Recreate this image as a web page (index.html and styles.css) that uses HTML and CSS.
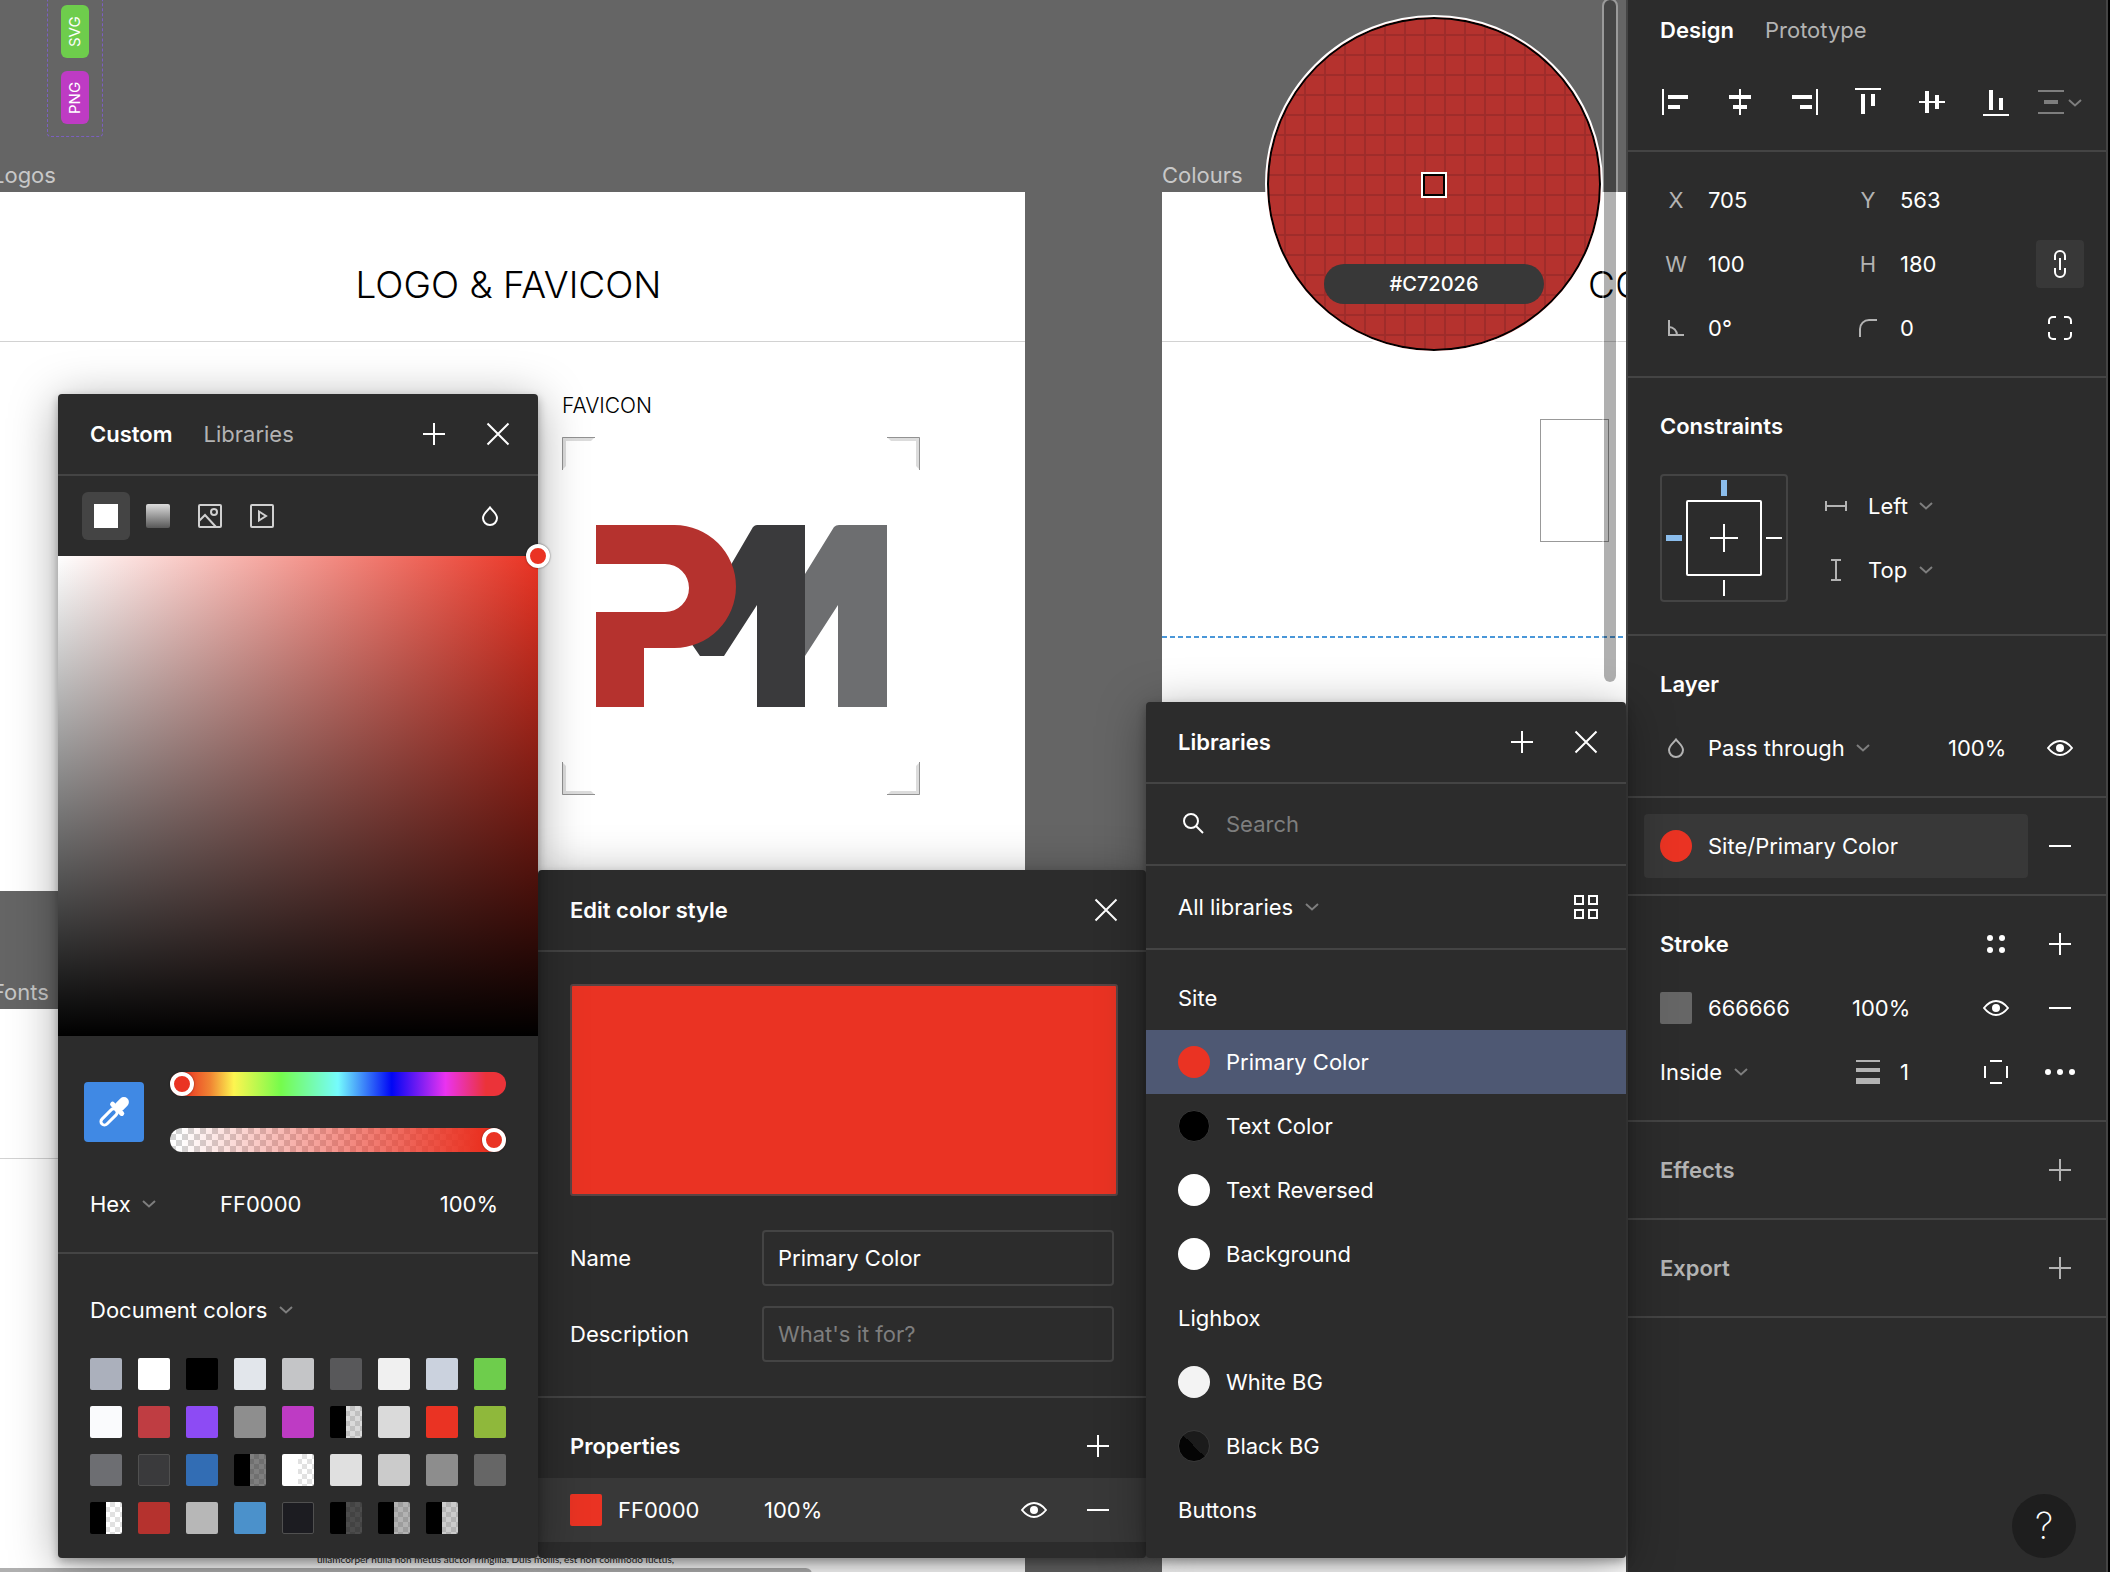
FILE: index.html
```html
<!DOCTYPE html>
<html lang="en">
<head>
<meta charset="utf-8">
<title>Style guide</title>
<link rel="stylesheet" href="styles.css">
</head>
<body>
<svg class="defs" aria-hidden="true">
  <symbol id="plus" viewBox="0 0 24 24"><path d="M12 1v22M1 12h22"/></symbol>
  <symbol id="minus" viewBox="0 0 24 24"><path d="M1 12h22"/></symbol>
  <symbol id="close" viewBox="0 0 24 24"><path d="M1.500 1.500l21 21M22.500 1.500l-21 21"/></symbol>
  <symbol id="chevron" viewBox="0 0 14 8"><path d="M1 1l6 5.500L13 1"/></symbol>
  <symbol id="eye" viewBox="0 0 26 18"><path d="M1 9C5 4 9 2 13 2s8 2 12 7c-4 5-8 7-12 7S5 14 1 9z"/><circle cx="13" cy="9" r="4" fill="currentColor" stroke="none"/></symbol>
  <symbol id="drop" viewBox="0 0 16 20"><path d="M8 1.500C6 4.500 1 7.500 1 12a7 7 0 0 0 14 0C15 7.500 10 4.500 8 1.500z"/></symbol>
</svg>

<div class="app">
  <main class="canvas">
    <div class="board">
      <div class="tags">
        <span class="tag tag-svg">SVG</span>
        <span class="tag tag-png">PNG</span>
      </div>

      <figure class="frame frame-logos">
        <figcaption>Logos</figcaption>
        <div class="sheet">
          <h1>LOGO &amp; FAVICON</h1>
          <section class="favicon">
            <h2>FAVICON</h2>
            <svg class="solid" width="358" height="358" viewBox="0 0 358 358" aria-label="PM favicon">
              <g fill="#dcdcdc">
                <path d="M0 0h33l-4 4H4v25l-4 4z"/><path d="M358 0h-33l4 4h25v25l4 4z"/>
                <path d="M0 358h33l-4-4H4v-25l-4-4z"/><path d="M358 358h-33l4-4h25v-25l4-4z"/>
              </g>
              <path fill="none" stroke="#929292" stroke-width="1" d="M.5 33V.5H33M357.500 33V.5H325M.5 325v32.500H33M357.500 325v32.500H325"/>
              <path fill="#6d6e70" d="M243 137l29-47q2-2 5-2h48v182h-49V168l-33 51z"/>
              <path fill="#3a3a3c" d="M170 126l21-36q2-2 4-2h48v182h-48V168l-33 51h-24l-9-13z"/>
              <path fill="#b5322e" d="M34 88h78.500a61.500 61.500 0 0 1 0 123H82v59H34V175h69a24 24 0 0 0 0-48H34z"/>
            </svg>
          </section>
        </div>
      </figure>

      <figure class="frame frame-fonts">
        <figcaption>Fonts</figcaption>
        <div class="sheet">
          <h1></h1>
          <p class="specimen">ullamcorper nulla non metus auctor fringilla. Duis mollis, est non commodo luctus,</p>
        </div>
      </figure>

      <figure class="frame frame-colours">
        <figcaption>Colours</figcaption>
        <div class="sheet">
          <h1>CO</h1>
          <div class="shape"></div>
          <div class="guide"></div>
        </div>
      </figure>

      <div class="scroll scroll-v"></div>
      <div class="scroll scroll-h"></div>

      <div class="loupe">
        <div class="loupe-pixel"></div>
        <output class="loupe-value">#C72026</output>
      </div>
    </div>

    <section class="panel panel-edit">
      <header class="panel-head">
        <h2>Edit color style</h2>
        <button class="icon" aria-label="Close"><svg width="24" height="24"><use href="#close"/></svg></button>
      </header>
      <div class="edit-body">
        <div class="preview"></div>
        <div class="field"><label for="style-name">Name</label><input id="style-name" type="text" value="Primary Color"></div>
        <div class="field"><label for="style-desc">Description</label><input id="style-desc" type="text" placeholder="What's it for?"></div>
      </div>
      <div class="props-head">
        <h2>Properties</h2>
        <button class="icon" aria-label="Add property"><svg width="24" height="24"><use href="#plus"/></svg></button>
      </div>
      <div class="props-row">
        <button class="chip chip-red" aria-label="Fill color"></button>
        <input class="value" type="text" value="FF0000" aria-label="Fill hex">
        <input class="value" type="text" value="100%" aria-label="Fill opacity">
        <button class="icon" aria-label="Toggle visibility"><svg width="26" height="18"><use href="#eye"/></svg></button>
        <button class="icon" aria-label="Remove fill"><svg width="24" height="24"><use href="#minus"/></svg></button>
      </div>
    </section>

    <section class="panel panel-color">
      <header class="panel-head">
        <div class="tabs"><button class="tab active">Custom</button><button class="tab">Libraries</button></div>
        <div class="head-actions">
          <button class="icon" aria-label="Create style"><svg width="24" height="24"><use href="#plus"/></svg></button>
          <button class="icon" aria-label="Close"><svg width="24" height="24"><use href="#close"/></svg></button>
        </div>
      </header>
      <div class="paint-types">
        <button class="paint selected" aria-label="Solid"><span class="paint-solid"></span></button>
        <button class="paint" aria-label="Gradient"><span class="paint-gradient"></span></button>
        <button class="paint" aria-label="Image"><svg width="24" height="24"><rect x="1" y="1" width="22" height="22" rx="1"/><circle cx="16" cy="8" r="3"/><path d="M1 17l6-6 11 12"/></svg></button>
        <button class="paint" aria-label="Video"><svg width="24" height="24"><rect x="1" y="1" width="22" height="22" rx="1"/><path d="M9 7.500l7 4.500-7 4.500z"/></svg></button>
        <button class="paint blend" aria-label="Blend mode"><svg width="16" height="20"><use href="#drop"/></svg></button>
      </div>
      <div class="spectrum"><span class="spectrum-handle"></span></div>
      <div class="mixer">
        <button class="picker" aria-label="Pick color">
          <svg width="32" height="32" viewBox="-2 -2 32 32"><g transform="rotate(45 14 14)"><rect x="9" y="-5" width="10" height="16" rx="5" fill="#fff" stroke="none"/><rect x="5" y="7" width="18" height="5" rx="2.500" fill="#fff" stroke="none"/><rect x="10.500" y="11" width="7" height="20" rx="3.500" stroke="#fff" stroke-width="3"/></g></svg>
        </button>
        <div class="sliders">
          <input class="slider hue" type="range" min="0" max="360" value="0" aria-label="Hue">
          <input class="slider alpha" type="range" min="0" max="100" value="100" aria-label="Opacity">
        </div>
      </div>
      <div class="hex-row">
        <label class="pick"><select aria-label="Color format"><option>Hex</option></select><svg width="14" height="8"><use href="#chevron"/></svg></label>
        <input class="value" type="text" value="FF0000" aria-label="Hex value">
        <input class="value end" type="text" value="100%" aria-label="Opacity value">
      </div>
      <div class="doc-colors">
        <label class="pick"><select aria-label="Color source"><option>Document colors</option></select><svg width="14" height="8"><use href="#chevron"/></svg></label>
        <div class="swatches">
          <i style="--c:#abb0bc"></i><i style="--c:#fff"></i><i style="--c:#000"></i><i style="--c:#e2e6eb"></i><i style="--c:#c4c5c7"></i><i style="--c:#58585a"></i><i style="--c:#f0f0f0"></i><i style="--c:#cbd2de"></i><i style="--c:#6ecd4c"></i>
          <i style="--c:#fafbfd"></i><i style="--c:#bf3d42"></i><i style="--c:#8d4bf4"></i><i style="--c:#8e8e8e"></i><i style="--c:#be3bc4"></i><i class="half" style="--a:.15"></i><i style="--c:#dadada"></i><i style="--c:#ea3323"></i><i style="--c:#8fb83b"></i>
          <i style="--c:#6d6e72"></i><i class="dim" style="--c:#3a3a3c"></i><i style="--c:#326db4"></i><i class="half" style="--a:.5"></i><i class="half light" style="--a:0"></i><i style="--c:#e0e0e0"></i><i style="--c:#cbcbcb"></i><i style="--c:#8d8d8d"></i><i style="--c:#666"></i>
          <i class="half" style="--a:0"></i><i style="--c:#b5322e"></i><i style="--c:#b7b7b7"></i><i style="--c:#4b91cb"></i><i class="dim" style="--c:#1c1c21"></i><i class="half" style="--a:.7"></i><i class="half" style="--a:.3"></i><i class="half" style="--a:.2"></i>
        </div>
      </div>
    </section>

    <section class="panel panel-libs">
      <header class="panel-head">
        <h2>Libraries</h2>
        <div class="head-actions">
          <button class="icon" aria-label="Create style"><svg width="24" height="24"><use href="#plus"/></svg></button>
          <button class="icon" aria-label="Close"><svg width="24" height="24"><use href="#close"/></svg></button>
        </div>
      </header>
      <label class="search"><svg width="32" height="22" viewBox="-5 0 32 22"><circle cx="8" cy="8" r="7"/><path d="M13 13l7 7"/></svg><input type="text" placeholder="Search" aria-label="Search"></label>
      <div class="lib-filter">
        <label class="pick"><select aria-label="Library"><option>All libraries</option></select><svg width="14" height="8"><use href="#chevron"/></svg></label>
        <button class="icon" aria-label="Show as grid"><svg width="24" height="24"><path d="M1 1h8v8H1zM15 1h8v8h-8zM1 15h8v8H1zM15 15h8v8h-8z"/></svg></button>
      </div>
      <div class="lib-list">
        <h3>Site</h3>
        <button class="style active"><span class="dot" style="--c:#ea3323"></span>Primary Color</button>
        <button class="style"><span class="dot dark" style="--c:#000"></span>Text Color</button>
        <button class="style"><span class="dot" style="--c:#fff"></span>Text Reversed</button>
        <button class="style"><span class="dot" style="--c:#fff"></span>Background</button>
        <h3>Lighbox</h3>
        <button class="style"><span class="dot" style="--c:#f3f3f3"></span>White BG</button>
        <button class="style"><span class="dot dark split"></span>Black BG</button>
        <h3>Buttons</h3>
      </div>
    </section>
  </main>

  <aside class="sidebar">
    <section class="group group-top">
      <div class="tabs"><button class="tab active">Design</button><button class="tab">Prototype</button></div>
      <div class="align">
        <button class="icon" aria-label="Align left"><svg class="solid" width="28" height="28"><path d="M0 1h2v26H0zM6 7h20v4H6zM6 17h12v4H6z"/></svg></button>
        <button class="icon" aria-label="Align horizontal centers"><svg class="solid" width="28" height="28"><path d="M13 1h2v26h-2zM3 7h22v4H3zM7 17h14v4H7z"/></svg></button>
        <button class="icon" aria-label="Align right"><svg class="solid" width="28" height="28"><path d="M26 1h2v26h-2zM2 7h20v4H2zM10 17h12v4H10z"/></svg></button>
        <button class="icon" aria-label="Align top"><svg class="solid" width="28" height="28"><path d="M1 0h26v2H1zM7 6h4v20H7zM17 6h4v12h-4z"/></svg></button>
        <button class="icon" aria-label="Align vertical centers"><svg class="solid" width="28" height="28"><path d="M1 13h26v2H1zM7 3h4v22H7zM17 7h4v14h-4z"/></svg></button>
        <button class="icon" aria-label="Align bottom"><svg class="solid" width="28" height="28"><path d="M1 26h26v2H1zM7 2h4v20H7zM17 10h4v12h-4z"/></svg></button>
        <button class="icon faint" aria-label="Distribute"><svg width="44" height="28"><path d="M0 3h26M0 25h26"/><path d="M6 14h14" stroke-width="4"/><path d="M31 12l6 5.500 6-5.500"/></svg></button>
      </div>
    </section>

    <section class="group">
      <div class="row">
        <label class="key" for="px">X</label><input class="value" id="px" type="text" value="705">
        <label class="key" for="py">Y</label><input class="value" id="py" type="text" value="563">
      </div>
      <div class="row">
        <label class="key" for="pw">W</label><input class="value" id="pw" type="text" value="100">
        <label class="key" for="ph">H</label><input class="value" id="ph" type="text" value="180">
        <button class="icon last pressed" aria-label="Constrain proportions"><svg width="12" height="28"><path d="M1 10V6a5 5 0 0 1 10 0v4M1 18v4a5 5 0 0 0 10 0v-4M6 8v12"/></svg></button>
      </div>
      <div class="row">
        <label class="key" for="pr" aria-label="Rotation"><svg width="16" height="16"><path d="M1 0v15h15M1 7a8 8 0 0 1 8 8"/></svg></label><input class="value" id="pr" type="text" value="0°">
        <label class="key" for="pc" aria-label="Corner radius"><svg width="18" height="18"><path d="M1 18v-8a9 9 0 0 1 9-9h8"/></svg></label><input class="value" id="pc" type="text" value="0">
        <button class="icon last" aria-label="Independent corners"><svg width="24" height="24"><path d="M1 8V5a4 4 0 0 1 4-4h3M16 1h3a4 4 0 0 1 4 4v3M23 16v3a4 4 0 0 1-4 4h-3M8 23H5a4 4 0 0 1-4-4v-3"/></svg></button>
      </div>
    </section>

    <section class="group">
      <h2 class="title">Constraints</h2>
      <div class="constraints">
        <svg class="pins" width="128" height="128"><rect class="pins-box" x="1" y="1" width="126" height="126" rx="3"/><rect x="27" y="27" width="74" height="74" rx="1"/><path d="M64 50v28M50 64h28M106 64h16M64 106v16"/><path stroke="#8bbdec" stroke-width="6" d="M64 6v16M6 64h16"/></svg>
        <div class="constraint-picks">
          <div class="constraint"><span class="key"><svg width="22" height="10"><path d="M1 0v10M21 0v10M1 5h20"/></svg></span><label class="pick"><select aria-label="Horizontal constraint"><option>Left</option></select><svg width="14" height="8"><use href="#chevron"/></svg></label></div>
          <div class="constraint"><span class="key"><svg width="10" height="22"><path d="M0 1h10M0 21h10M5 1v20"/></svg></span><label class="pick"><select aria-label="Vertical constraint"><option>Top</option></select><svg width="14" height="8"><use href="#chevron"/></svg></label></div>
        </div>
      </div>
    </section>

    <section class="group">
      <h2 class="title">Layer</h2>
      <div class="row row-layer">
        <span class="key"><svg width="16" height="20"><use href="#drop"/></svg></span>
        <label class="pick"><select aria-label="Blend mode"><option>Pass through</option></select><svg width="14" height="8"><use href="#chevron"/></svg></label>
        <input class="value" type="text" value="100%" aria-label="Layer opacity">
        <button class="icon" aria-label="Toggle visibility"><svg width="26" height="18"><use href="#eye"/></svg></button>
      </div>
    </section>

    <section class="group fill">
      <button class="fill-style"><span class="dot" style="--c:#ea3323"></span>Site/Primary Color</button>
      <button class="icon" aria-label="Remove fill"><svg width="24" height="24"><use href="#minus"/></svg></button>
    </section>

    <section class="group">
      <div class="row">
        <h2 class="wide">Stroke</h2>
        <button class="icon" aria-label="Styles"><svg class="solid" width="18" height="18"><circle cx="3" cy="3" r="3"/><circle cx="15" cy="3" r="3"/><circle cx="3" cy="15" r="3"/><circle cx="15" cy="15" r="3"/></svg></button>
        <button class="icon" aria-label="Add stroke"><svg width="24" height="24"><use href="#plus"/></svg></button>
      </div>
      <div class="row">
        <button class="chip chip-gray" aria-label="Stroke color"></button>
        <input class="value" type="text" value="666666" aria-label="Stroke hex">
        <input class="value span2" type="text" value="100%" aria-label="Stroke opacity">
        <button class="icon" aria-label="Toggle visibility"><svg width="26" height="18"><use href="#eye"/></svg></button>
        <button class="icon" aria-label="Remove stroke"><svg width="24" height="24"><use href="#minus"/></svg></button>
      </div>
      <div class="row">
        <label class="pick span2"><select aria-label="Stroke position"><option>Inside</option></select><svg width="14" height="8"><use href="#chevron"/></svg></label>
        <label class="key" for="sw" aria-label="Stroke width"><svg class="solid" width="24" height="24"><path d="M0 0h24v2H0zM0 8h24v4H0zM0 18h24v6H0z"/></svg></label>
        <input class="value" id="sw" type="text" value="1">
        <button class="icon" aria-label="Strokes per side"><svg width="24" height="24"><path d="M6 1h12M6 23h12M1 6v12M23 6v12"/></svg></button>
        <button class="icon" aria-label="Advanced stroke"><svg class="solid" width="30" height="6"><circle cx="3" cy="3" r="3"/><circle cx="15" cy="3" r="3"/><circle cx="27" cy="3" r="3"/></svg></button>
      </div>
    </section>

    <section class="group">
      <div class="row muted"><h2 class="wide">Effects</h2><button class="icon last" aria-label="Add effect"><svg width="24" height="24"><use href="#plus"/></svg></button></div>
    </section>
    <section class="group">
      <div class="row muted"><h2 class="wide">Export</h2><button class="icon last" aria-label="Add export"><svg width="24" height="24"><use href="#plus"/></svg></button></div>
    </section>

    <button class="help" aria-label="Help">?</button>
  </aside>
</div>
</body>
</html>
```
FILE: styles.css
```css
* { box-sizing: border-box; margin: 0; padding: 0; }

:root {
  --bg: #2c2c2c;
  --raised: #383838;
  --line: #444;
  --soft: #b3b3b3;
  --faint: #7e7e7e;
  --red: #ea3323;
  --logo-red: #b5322e;
}

body {
  background: #000;
  color: #fff;
  font: 400 22px/32px Inter, "Liberation Sans", sans-serif;
  overflow: hidden;
}

button, input, select {
  font: inherit;
  color: inherit;
  background: none;
  border: 0;
  outline: 0;
  appearance: none;
}
input { min-width: 0; width: 100%; }
input::placeholder { color: var(--faint); opacity: 1; }
h2, h3 { font-size: 22px; font-weight: 600; }
h3 { font-weight: 400; }

svg { display: block; flex: none; fill: none; stroke: currentColor; stroke-width: 2; }
svg.solid { fill: currentColor; stroke: none; }
.defs { position: absolute; width: 0; height: 0; }

.app { display: flex; height: 100vh; padding-right: 2px; }
.canvas { position: relative; flex: 1; z-index: 1; }
.board { position: absolute; inset: 0; overflow: hidden; background: #656565; }

/* Shared controls */
.icon {
  display: flex; align-items: center; justify-content: center;
  width: 48px; height: 48px; flex: none; border-radius: 4px;
}
.pressed { background: var(--raised); }
.faint { color: var(--faint); }
.key { display: flex; justify-content: center; align-items: center; width: 32px; color: var(--soft); }
.pick { display: flex; align-items: center; gap: 11px; }
.pick svg { color: var(--faint); }
.chip { width: 32px; height: 32px; border-radius: 2px; }
.chip-red { background: var(--red); }
.chip-gray { background: #666; }
.dot { width: 32px; height: 32px; flex: none; border-radius: 50%; background: var(--c); }
.dot.dark { border: 1px solid #383838; }
.dot.split { background: linear-gradient(45deg, #040404 50%, #1b1b1b 50%); }
.tabs { display: flex; gap: 31px; }
.tab { color: var(--soft); }
.tab.active { color: #fff; font-weight: 600; }

/* Artboards */
.tags {
  position: absolute; left: 47px; top: -12px; width: 56px; height: 149px;
  border: 1px dashed #7b5fc0; border-radius: 4px;
  display: flex; flex-direction: column; align-items: center; gap: 13px; padding-top: 16px;
}
.tag {
  width: 28px; height: 53px; border-radius: 6px; writing-mode: vertical-rl; transform: rotate(180deg);
  text-align: center; font-size: 15px; line-height: 28px;
}
.tag-svg { background: #6ecd4c; }
.tag-png { background: #be3bc4; }
.frame { position: absolute; display: flex; flex-direction: column; }
.frame figcaption { color: #c8c8c8; line-height: 30px; padding-bottom: 2px; }
.frame-logos { left: -8px; top: 160px; width: 1033px; height: 731px; }
.frame-fonts { left: -8px; top: 977px; width: 1033px; height: 900px; }
.frame-colours { left: 1162px; top: 160px; width: 1033px; height: 1600px; }
.sheet { position: relative; flex: 1; background: #fff; color: #000; }
.sheet h1 {
  height: 150px; padding: 70px 0 33px; border-bottom: 1px solid #d2d2d2;
  font-size: 37px; font-weight: 300; line-height: 46px; text-align: center;
}
.frame-colours h1 { text-align: left; padding-left: 426px; }
.favicon { position: absolute; left: 570px; top: 198px; }
.favicon h2 { font-size: 21px; font-weight: 300; margin-bottom: 15px; }
.specimen { padding: 393px 0 0 325px; color: #222; font: 10px/14px Lato, sans-serif; white-space: nowrap; }
.shape { position: absolute; left: 378px; top: 227px; width: 69px; height: 123px; border: 1px solid #999; }
.guide {
  position: absolute; left: 0; right: 0; top: 444px; height: 2px;
  background: repeating-linear-gradient(90deg, #4a97d8 0 5px, transparent 5px 8px);
}
.scroll { position: absolute; background: rgba(0, 0, 0, .31); background-clip: padding-box; border: 2px solid rgba(255, 255, 255, .35); border-radius: 8px; }
.scroll-v { right: 8px; top: -2px; width: 16px; height: 686px; }
.scroll-h { left: -8px; bottom: -10px; width: 822px; height: 16px; }

.loupe {
  position: absolute; left: 1265px; top: 15px; width: 338px; height: 338px;
  border: 2px solid #fff; border-radius: 50%;
  box-shadow: inset 0 0 0 2px #000;
  background:
    repeating-linear-gradient(90deg, transparent 0 17px, #9f2c2a 17px 19px, transparent 19px 20px),
    repeating-linear-gradient(transparent 0 17px, #9f2c2a 17px 19px, transparent 19px 20px),
    var(--logo-red);
  display: flex; flex-direction: column; align-items: center;
}
.loupe-pixel { margin-top: 155px; width: 26px; height: 26px; border: 2px solid #fff; box-shadow: inset 0 0 0 2px #000; background: var(--logo-red); }
.loupe-value {
  margin-top: 66px; width: 220px; height: 40px; border-radius: 20px; background: var(--raised);
  font-size: 20px; font-weight: 500; line-height: 40px; text-align: center;
}

/* Floating panels */
.panel {
  position: absolute; background: var(--bg); border-radius: 4px;
  box-shadow: 0 4px 10px rgba(0, 0, 0, .3), 0 8px 48px rgba(0, 0, 0, .35);
}
.panel-color { left: 58px; top: 394px; width: 480px; }
.panel-edit { left: 538px; top: 870px; width: 608px; padding-bottom: 16px; }
.panel-libs { right: 0; top: 702px; width: 480px; padding-bottom: 16px; }
.panel-head {
  display: flex; align-items: center; justify-content: space-between;
  height: 82px; padding: 0 16px 0 32px; border-bottom: 2px solid var(--line);
}
.head-actions { display: flex; gap: 16px; }

.paint-types { display: flex; align-items: center; gap: 4px; height: 80px; padding: 0 24px; }
.paint { display: flex; align-items: center; justify-content: center; width: 48px; height: 48px; border-radius: 6px; color: #d0d0d0; }
.paint.selected { background: var(--line); }
.paint-solid { width: 24px; height: 24px; background: #fff; }
.paint-gradient { width: 24px; height: 24px; border-radius: 2px; background: linear-gradient(#dcdcdc, #585858); }
.paint.blend { margin-left: auto; color: #fff; }
.spectrum {
  position: relative; aspect-ratio: 1;
  background: linear-gradient(to top, #000, transparent), linear-gradient(to right, #fff, var(--red));
}
.spectrum-handle {
  position: absolute; right: -12px; top: -12px; width: 24px; height: 24px; border-radius: 50%;
  background: var(--red); border: 4px solid #fff; box-shadow: 0 0 2px rgba(0, 0, 0, .6);
}
.mixer { display: flex; align-items: center; gap: 26px; padding: 36px 32px 0 26px; }
.picker { display: flex; align-items: center; justify-content: center; width: 60px; height: 60px; border-radius: 4px; background: #4089e4; }
.sliders { flex: 1; display: flex; flex-direction: column; gap: 32px; }
.slider { display: block; height: 24px; border-radius: 12px; }
.slider::-webkit-slider-thumb {
  appearance: none; width: 24px; height: 24px; border-radius: 50%;
  background: var(--red); border: 4px solid #fff; box-shadow: 0 0 2px rgba(0, 0, 0, .5);
}
.hue { background: linear-gradient(90deg, #ea3323 4%, #f08533 12%, #fdf550 19%, #75fb4c 33%, #75fbfd 50%, #0006f5 66%, #ea33f0 82%, #eb3339 94%); }
.alpha {
  background:
    linear-gradient(90deg, rgba(234, 51, 35, 0) 3%, var(--red) 92%),
    repeating-conic-gradient(#d4d4d4 0 25%, #fff 0 50%) 0 0 / 12px 12px;
}
.hex-row { display: grid; grid-template-columns: 130px 1fr 80px; align-items: center; height: 102px; padding: 4px 40px 0 32px; border-bottom: 2px solid var(--line); }
.end { text-align: right; }
.doc-colors { padding: 40px 32px 24px; }
.swatches { display: grid; grid-template-columns: repeat(9, 32px); justify-content: space-between; gap: 16px; margin-top: 32px; }
.swatches i { height: 32px; border-radius: 2px; background: var(--c); }
.swatches .dim { border: 1px solid #505050; }
.swatches .half {
  --solid: #000;
  background:
    linear-gradient(90deg, var(--solid) 50%, rgba(0, 0, 0, var(--a)) 50%),
    repeating-conic-gradient(#fff 0 25%, #e1e1e1 0 50%) 0 0 / 10px 10px;
}
.swatches .light { --solid: #fff; }

.edit-body { padding: 32px 32px 34px; border-bottom: 2px solid var(--line); }
.preview { width: calc(100% + 4px); height: 212px; margin-bottom: 34px; background: var(--red); border: 2px solid #5a4444; border-radius: 3px; }
.field { display: grid; grid-template-columns: 192px 1fr; align-items: center; }
.field + .field { margin-top: 20px; }
.field input { height: 56px; padding: 0 14px; border: 2px solid var(--line); border-radius: 4px; }
.props-head { display: flex; align-items: center; justify-content: space-between; height: 80px; padding: 16px 24px 0 32px; }
.props-row {
  display: grid; grid-template-columns: 48px 146px 1fr 64px 48px; align-items: center;
  height: 64px; padding: 0 24px 0 32px; background: var(--raised);
}

.search { display: flex; align-items: center; gap: 16px; height: 82px; padding: 0 32px; border-bottom: 2px solid var(--line); }
.lib-filter { display: flex; align-items: center; justify-content: space-between; height: 84px; padding: 0 16px 0 32px; border-bottom: 2px solid var(--line); }
.lib-list { padding-top: 16px; }
.lib-list h3, .style { display: flex; align-items: center; gap: 16px; width: 100%; height: 64px; padding: 0 32px; }
.style.active { background: #4e5873; }

/* Inspector */
.sidebar { position: relative; width: 482px; flex: none; background: var(--bg); border: solid var(--line); border-width: 0 2px; }
.group { padding: 16px 22px 16px 32px; border-bottom: 2px solid var(--line); }
.group-top { padding: 14px 22px 6px 24px; }
.group-top .tabs { padding-left: 8px; height: 46px; align-items: flex-start; }
.align { display: flex; justify-content: space-between; align-items: center; height: 84px; }
.row {
  display: grid; grid-template-columns: 48px 144px 48px 1fr 64px 48px;
  align-items: center; height: 64px;
}
.row-layer { grid-template-columns: 48px 240px 1fr 48px; }
.span2 { grid-column: span 2; }
.wide { grid-column: 1 / span 4; }
.last { grid-column: 6; }
.muted { color: var(--soft); }
.title { line-height: 64px; }
.constraints { display: flex; gap: 32px; padding: 16px 0; }
.pins-box { stroke: var(--line); }
.constraint { display: flex; align-items: center; gap: 16px; height: 64px; }
.fill { display: flex; justify-content: space-between; align-items: center; padding-left: 16px; }
.fill-style { display: flex; align-items: center; gap: 16px; width: 384px; height: 64px; padding: 0 16px; border-radius: 4px; background: var(--raised); }
.help {
  position: absolute; right: 30px; bottom: 14px; width: 64px; height: 64px;
  border-radius: 50%; background: #1e1e1e; font-size: 37px; font-weight: 200; line-height: 64px;
}
```
